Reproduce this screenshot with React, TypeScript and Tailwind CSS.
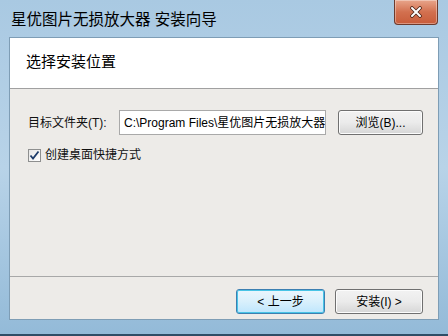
export default function App() {
  const font = { fontFamily: '"Liberation Sans", "Noto Sans CJK SC", sans-serif' };
  return (
    <div className="w-[448px] h-[336px] bg-gradient-to-b from-[#a9c9e2] via-[#b8d3e8] to-[#93bad8] flex flex-col overflow-hidden" style={font}>
      {/* title bar */}
      <div className="h-[37px] flex items-start justify-between pl-[11px] pr-[10px]">
        <div className="mt-[9px] text-[15.5px] leading-[22px] text-black">星优图片无损放大器 安装向导</div>
        <div className="w-[44px] h-[25px] rounded-b-[4px] border border-t-0 border-[#6d3a2c] bg-gradient-to-b from-[#e8a58b] via-[#d2704f] to-[#c85c3a] flex items-center justify-center shadow-[inset_0_0_0_1px_rgba(255,255,255,0.35)]">
          <svg width="14" height="12" viewBox="0 0 14 12">
            <path d="M3 2 L11 10 M11 2 L3 10" stroke="#4a2418" strokeWidth="3.6" strokeLinecap="round" />
            <path d="M3 2 L11 10 M11 2 L3 10" stroke="#ffffff" strokeWidth="2" strokeLinecap="round" />
          </svg>
        </div>
      </div>
      {/* client area */}
      <div className="mx-[9px] h-[283px] border border-[#7e9db5] bg-[#edebe8] flex flex-col">
        <div className="h-[51px] bg-white border-b border-[#a0a0a0] flex items-center pl-[16px] pb-[2px]">
          <span className="text-[15px] text-black">选择安装位置</span>
        </div>
        <div className="flex-1 flex flex-col pl-[18px] pt-[21px]">
          <div className="flex items-center h-[25px]">
            <span className="text-[12px] text-[#111] w-[91px]">目标文件夹(T):</span>
            <div className="w-[207px] h-[25px] bg-white border border-[#a9a9a9] flex items-center pl-[4px] text-[12px] text-black whitespace-nowrap overflow-hidden">
              C:\Program Files\星优图片无损放大器
            </div>
            <div className="ml-[12px] w-[85px] h-[25px] rounded-[3px] border border-[#707070] bg-gradient-to-b from-[#f2f2f2] via-[#ebebeb] to-[#d6d6d6] flex items-center justify-center text-[12px] text-black shadow-[inset_0_0_0_1px_#fcfcfc]">
              浏览(B)...
            </div>
          </div>
          <div className="flex items-center mt-[11px]">
            <div className="w-[13px] h-[13px] border border-[#8e8f8f] bg-gradient-to-br from-[#e6e6e6] to-white flex items-center justify-center">
              <svg width="11" height="11" viewBox="0 0 11 11">
                <path d="M1.5 5.5 L4 8.5 L9.5 1.5" stroke="#1c3b6a" strokeWidth="1.8" fill="none" />
              </svg>
            </div>
            <span className="ml-[4px] text-[12px] text-[#111]">创建桌面快捷方式</span>
          </div>
          <div className="flex-1" />
        </div>
        <div className="h-[43px] border-t border-[#a8a8a8] flex items-start justify-end pt-[12px] pr-[15px] gap-[10px]">
          <div className="w-[89px] h-[25px] rounded-[3px] border border-[#3c7fb1] bg-gradient-to-b from-[#eaf6fd] via-[#d9f0fc] to-[#bee6fd] flex items-center justify-center text-[12px] text-black shadow-[inset_0_0_0_1px_#48c4e6]">
            &lt; 上一步
          </div>
          <div className="w-[88px] h-[25px] rounded-[3px] border border-[#707070] bg-gradient-to-b from-[#f2f2f2] via-[#ebebeb] to-[#d6d6d6] flex items-center justify-center text-[12px] text-black shadow-[inset_0_0_0_1px_#fcfcfc]">
            安装(I) &gt;
          </div>
        </div>
      </div>
      <div className="flex-1 border-b-2 border-[#2f4d66]" />
    </div>
  );
}
